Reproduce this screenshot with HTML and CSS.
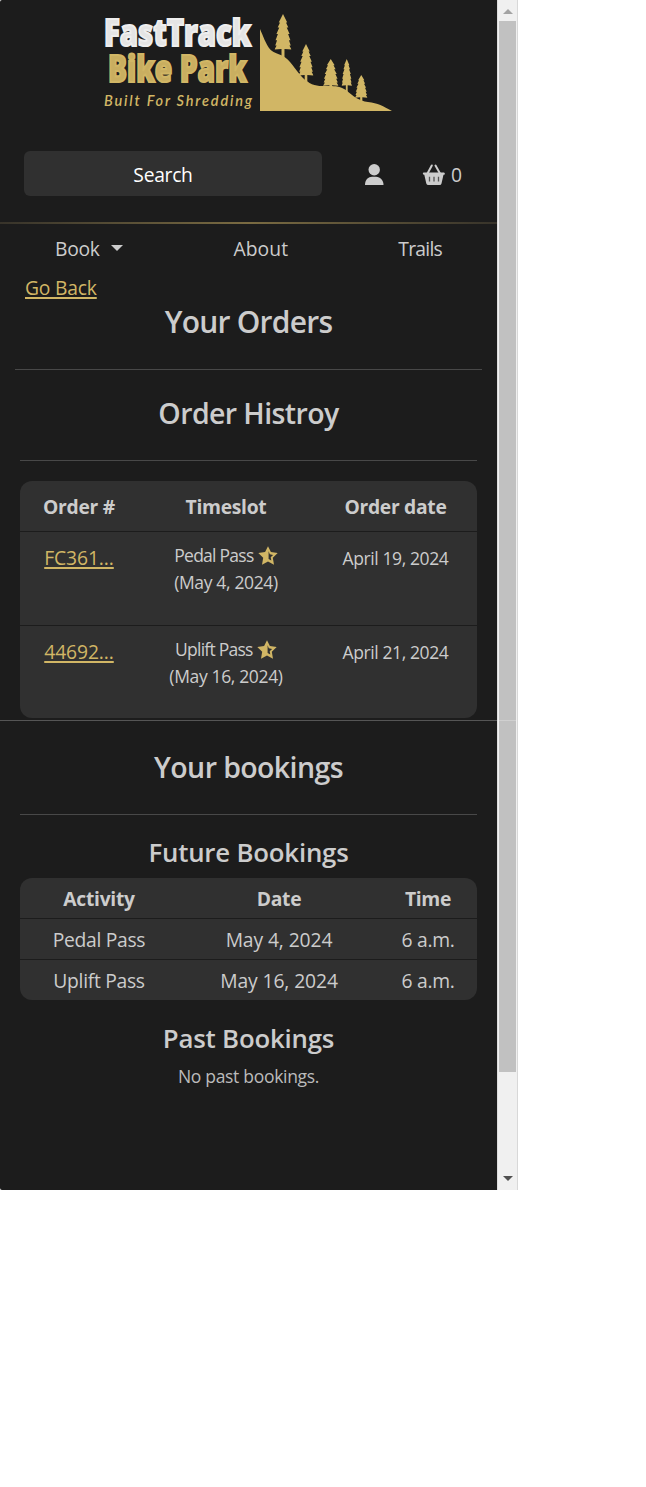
FILE: index.html
```html
<!DOCTYPE html>
<html lang="en">
<head>
<meta charset="utf-8">
<title>FastTrack Bike Park - Your Orders</title>
<link rel="stylesheet" href="styles.css">
</head>
<body>
<svg class="defs" width="0" height="0">
  <symbol id="star-half" viewBox="0 0 20 19">
    <path d="M10 .2 12.900 6 19.700 6.900 14.800 11.800 16 18.700 10 15.500 4 18.700 5.200 11.800.3 6.900 7.100 6ZM10.600 5.300V13L13.300 14.500 12.700 11.200 15.100 8.900 11.800 8.200Z" fill-rule="evenodd" fill="#d1b665"/>
  </symbol>
  <symbol id="tree" viewBox="0 0 16 42" preserveAspectRatio="none">
    <path d="M8 0 12 8 10.8 8 13 13 11.5 13 14.2 19 12.8 19 15 25 13.6 25 15.3 30 14 30 16 34 9.4 33.5V42H6.6V33.5L0 34 2 30 .7 30 2.4 25 1 25 3.2 19 1.8 19 4.5 13 3 13 5.2 8 4 8Z" fill="#d1b665"/>
  </symbol>
</svg>
<div class="viewport">
  <div class="page">
    <header>
      <svg class="logo" viewBox="0 0 497 120" role="img" aria-label="FastTrack Bike Park">
        <g class="logo-name">
          <text class="light" transform="translate(104 45.500) scale(1 1.26)" textLength="147" lengthAdjust="spacingAndGlyphs">FastTrack</text>
          <text class="gold" transform="translate(108 81.500) scale(1 1.26)" textLength="139" lengthAdjust="spacingAndGlyphs">Bike Park</text>
        </g>
        <text class="tagline" x="104" y="106" textLength="148">Built For Shredding</text>
        <path d="M260 29C263 36 266 44 269 48 273 53 277 53 283 56 290 60 295 69 302 77 309 84 315 86 322 86 331 86 339 85 346 90 353 96 359 101 368 102 378 103 383 106 392 111H260Z" fill="#d1b665"/>
        <use href="#tree" x="274.500" y="14" width="17" height="44"/>
        <use href="#tree" x="298.500" y="44" width="15" height="39"/>
        <use href="#tree" x="323" y="59" width="15.500" height="33"/>
        <use href="#tree" x="341.500" y="59" width="10.500" height="33"/>
        <use href="#tree" x="355" y="75" width="12.500" height="28"/>
      </svg>
      <div class="tools">
        <div class="search">Search</div>
        <svg class="user" viewBox="0 0 20 22"><circle cx="10.200" cy="5.800" r="5.700"/><path d="M1 21C1 15.500 4.500 12.800 8 12.800H12C16.500 12.800 19.500 16.500 19.500 21Z"/></svg>
        <svg class="basket" viewBox="0 0 24 22"><path d="M5.500 9.500 9.800 1.500M18 9.500 13.500 1.500" fill="none" stroke="#ccc" stroke-width="2" stroke-linecap="round"/><path d="M1.500 8.500H22Q23.500 9 22.500 10.800H21.500L19.500 19.500Q19.200 21 17.500 21H6.500Q4.700 21 4.300 19.500L2.300 10.800H1.500Q0 9 1.500 8.500Z"/><path d="M7.500 12.700V17.500M12 12.700V17.500M16.500 12.700V17.500" stroke="#555" stroke-width="1.300"/></svg>
        <span class="count">0</span>
      </div>
    </header>
    <nav><span class="book">Book <i class="caret"></i></span><span class="about">About</span><span class="trails">Trails</span></nav>
    <main>
      <a class="back">Go Back</a>
      <h1>Your Orders</h1>
      <hr class="wide">
      <h2 class="history">Order Histroy</h2>
      <hr>
      <div class="table orders">
        <div class="row head"><span>Order #</span><span>Timeslot</span><span>Order date</span></div>
        <div class="row"><a>FC361...</a><div class="slot"><span class="pass">Pedal Pass</span> <svg class="star"><use href="#star-half"/></svg><br>(May 4, 2024)</div><span class="date">April 19, 2024</span></div>
        <div class="row"><a>44692...</a><div class="slot"><span class="pass">Uplift Pass</span> <svg class="star"><use href="#star-half"/></svg><br>(May 16, 2024)</div><span class="date">April 21, 2024</span></div>
      </div>
      <div class="divider"></div>
      <h2 class="bookings">Your bookings</h2>
      <hr>
      <h3>Future Bookings</h3>
      <div class="table future">
        <div class="row head"><span>Activity</span><span>Date</span><span>Time</span></div>
        <div class="row"><span>Pedal Pass</span><span class="day">May 4, 2024</span><span>6 a.m.</span></div>
        <div class="row"><span>Uplift Pass</span><span class="day">May 16, 2024</span><span>6 a.m.</span></div>
      </div>
      <h3 class="past">Past Bookings</h3>
      <p>No past bookings.</p>
    </main>
  </div>
  <div class="scrollbar"><i class="up"></i><div class="thumb"><div class="seam"></div></div><i class="down"></i></div>
</div>
</body>
</html>
```
FILE: styles.css
```css
* { box-sizing: border-box; }
body { margin: 0; background: #fff; font-family: "Open Sans", "Noto Sans", sans-serif; font-size: 19.3px; letter-spacing: -.3px; color: #ccc; }
.defs { position: absolute; }
.viewport { display: flex; width: 518px; height: 1190px; }
.page { width: 497px; background: #1c1c1c; border-radius: 2px 0 0 2px; }
header { height: 224px; border-bottom: 2px solid; border-image: linear-gradient(90deg, #37332a, #7a6b42 50%, #37332a) 1; }
.logo { display: block; width: 497px; height: 120px; }
.logo-name { font-family: "Open Sans", sans-serif; font-size: 30px; font-weight: 800; letter-spacing: 0; }
.logo-name text { stroke-width: 1.7px; }
.light { fill: #e4e4e4; stroke: #eee; }
.gold { fill: #c9ae60; stroke: #d1b665; }
.tagline { font-family: Lato, sans-serif; font-size: 14.5px; font-style: italic; font-weight: 600; letter-spacing: 0; fill: #d1b665; }
.tools { display: flex; align-items: center; height: 45px; margin: 31px 0 0 24px; fill: #ccc; }
.search { width: 298px; height: 45px; line-height: 47px; padding-right: 20px; border-radius: 6px; background: #303030; color: #fff; text-align: center; }
.user { width: 20px; height: 22px; margin: 2px 0 0 42px; }
.basket { width: 24px; height: 22px; margin: 2px 0 0 38px; }
.count { margin: 2px 0 0 5px; }
nav { display: flex; justify-content: space-between; height: 49px; line-height: 49px; padding: 0 55px; }
.caret { display: inline-block; margin: 0 0 5px 7px; border: 6px solid transparent; border-top-color: #ccc; border-bottom: 0; }
.about { letter-spacing: .1px; }
.trails { letter-spacing: -.75px; }
main { text-align: center; }
a { color: #d1b665; text-decoration: underline; text-decoration-thickness: 2px; text-underline-offset: 2px; }
.back { display: block; width: 97px; height: 30px; line-height: 30px; padding-left: 25px; text-align: left; white-space: nowrap; letter-spacing: -.2px; }
h1, h2, h3, p { margin: 0; font-weight: 600; }
h1 { height: 66px; font-size: 30px; line-height: 38px; letter-spacing: -.75px; }
hr { height: 1px; margin: 0 20px; border: 0; background: #484848; }
hr.wide { margin: 0 15px; }
h2 { font-size: 28.5px; letter-spacing: -.6px; }
.history { height: 90px; line-height: 86px; }
.table { width: 457px; margin: 0 auto 0 20px; border-radius: 12px; background: #303030; overflow: hidden; }
.row { display: grid; border-bottom: 1px solid #1c1c1c; }
.row:last-child { border-bottom: 0; }
.head { font-weight: 700; }
.orders { margin-top: 20px; }
.orders .row { grid-template-columns: 118px 176px 163px; height: 94px; line-height: 52px; }
.orders .row.head { height: 51px; line-height: 52px; }
.orders .row:last-child { height: 92px; }
.orders .row > a { letter-spacing: -.1px; }
.orders .slot { padding-top: 10px; font-size: 17.5px; line-height: 26.5px; letter-spacing: -.35px; }
.pass { letter-spacing: -.75px; }
.orders .date { font-size: 17.5px; letter-spacing: -.4px; }
.star { width: 20px; height: 19px; vertical-align: -3px; }
.divider { width: 518px; height: 1px; margin-top: 2px; background: #555; }
.bookings { height: 93px; line-height: 92px; }
h3 { height: 63px; font-size: 25.8px; line-height: 75px; letter-spacing: -.2px; }
.future .row { grid-template-columns: 158px 202px 96px; height: 41px; line-height: 42px; }
.future .row:last-child { height: 40px; }
.day { letter-spacing: -.1px; }
.past { height: 60px; line-height: 77px; }
p { font-size: 17.5px; font-weight: 400; line-height: 33px; color: #bbb; }
.scrollbar { display: flex; flex-direction: column; align-items: center; width: 21px; border-left: 1px solid #ddd; border-right: 1px solid #d8d8d8; background: #f0f0f0; }
.up { margin: 9px 0 7px; border: 5px solid transparent; border-bottom-color: #a3a3a3; border-top: 0; }
.thumb { width: 17px; height: 1051px; padding-top: 699px; background: #c1c1c1; }
.seam { height: 1px; background: #d0d0d0; }
.down { margin-top: 104px; border: 5px solid transparent; border-top-color: #505050; border-bottom: 0; }
```
